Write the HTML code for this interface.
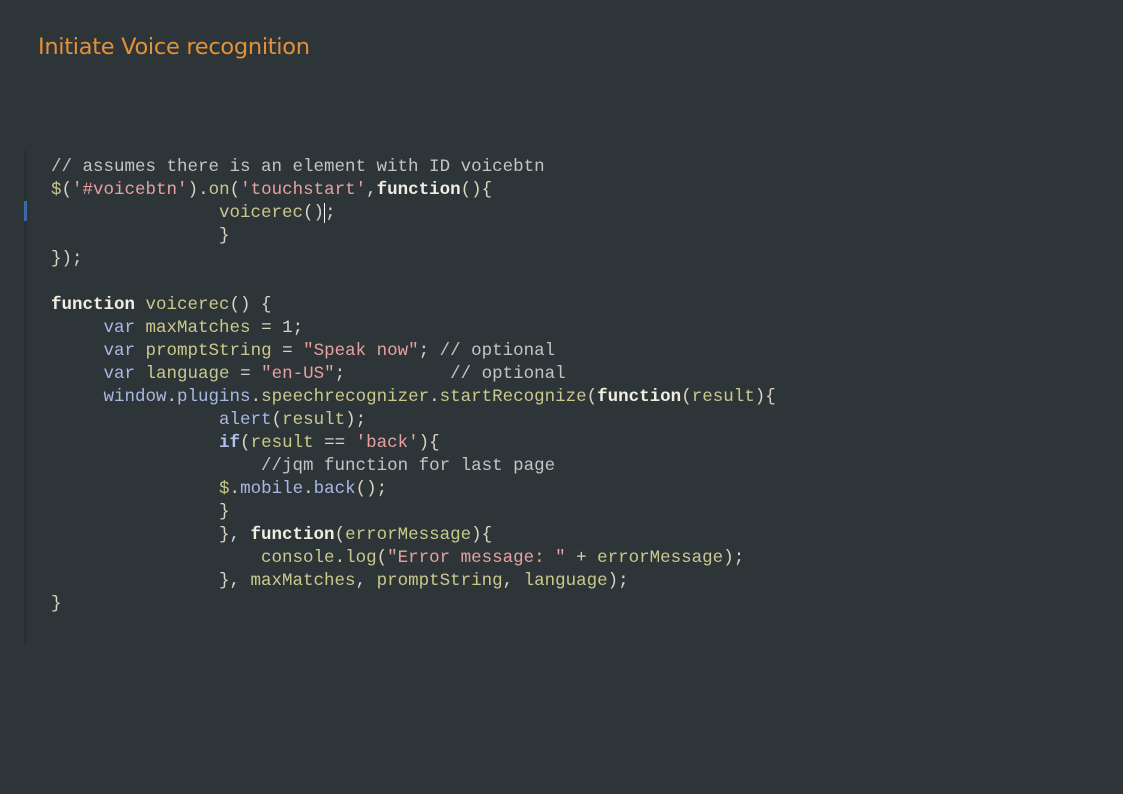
<!DOCTYPE html>
<html><head><meta charset="utf-8"><style>
html,body{margin:0;padding:0;}
body{width:1123px;height:794px;background:#2e3538;position:relative;overflow:hidden;}
.t{position:absolute;left:38px;top:34px;font-family:"DejaVu Sans","Liberation Sans",sans-serif;font-size:22.5px;color:#e0913a;letter-spacing:-0.3px;}
.g{position:absolute;left:24px;top:150px;width:3px;height:495px;background:#283033;}
.m{position:absolute;left:24px;top:201px;width:3px;height:20px;background:#3a6aa0;}
pre{position:absolute;left:51px;top:156px;margin:0;font-family:"Liberation Mono","DejaVu Sans Mono",monospace;font-size:17.5px;line-height:23px;color:#d8d4c0;}
.c{color:#c4c4c0}.s{color:#e8a0a0}.i{color:#c9c98c}.k{color:#a8b8e4}.b{color:#f0eee0;font-weight:bold}.bk{color:#b0c0ec;font-weight:bold}.p{color:#e0d8c0}
.cur{border-left:1px solid #fff;}
</style></head><body>
<div class="t">Initiate Voice recognition</div>
<div class="g"></div><div class="m"></div>
<pre><span class="c">// assumes there is an element with ID voicebtn</span>
<span class="i">$</span>(<span class="s">'#voicebtn'</span>).<span class="i">on</span>(<span class="s">'touchstart'</span>,<span class="b">function</span>(){
                <span class="i">voicerec</span>()<span class="cur"></span>;
                }
});

<span class="b">function</span> <span class="i">voicerec</span>() {
     <span class="k">var</span> <span class="i">maxMatches</span> = 1;
     <span class="k">var</span> <span class="i">promptString</span> = <span class="s">"Speak now"</span>; <span class="c">// optional</span>
     <span class="k">var</span> <span class="i">language</span> = <span class="s">"en-US"</span>;          <span class="c">// optional</span>
     <span class="k">window</span>.<span class="k">plugins</span>.<span class="i">speechrecognizer</span>.<span class="i">startRecognize</span>(<span class="b">function</span>(<span class="i">result</span>){
                <span class="k">alert</span>(<span class="i">result</span>);
                <span class="bk">if</span>(<span class="i">result</span> == <span class="s">'back'</span>){
                    <span class="c">//jqm function for last page</span>
                <span class="i">$</span>.<span class="k">mobile</span>.<span class="k">back</span>();
                }
                }, <span class="b">function</span>(<span class="i">errorMessage</span>){
                    <span class="i">console</span>.<span class="i">log</span>(<span class="s">"Error message: "</span> + <span class="i">errorMessage</span>);
                }, <span class="i">maxMatches</span>, <span class="i">promptString</span>, <span class="i">language</span>);
}</pre>
</body></html>
